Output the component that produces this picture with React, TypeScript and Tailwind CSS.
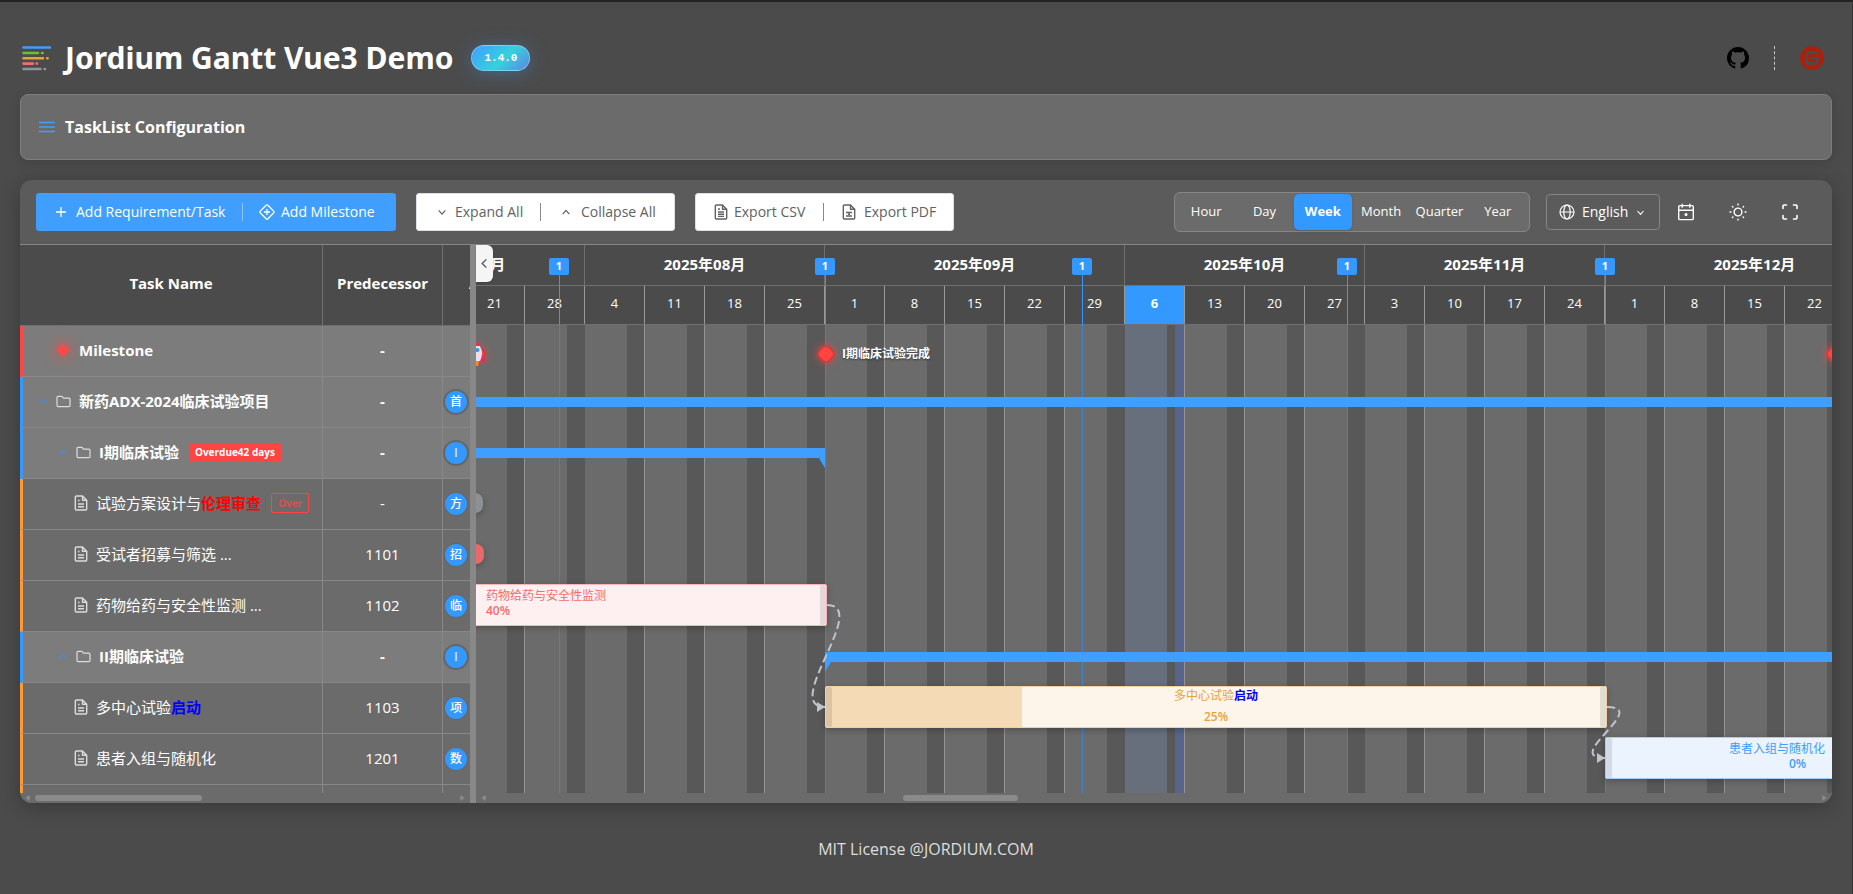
import type { ReactNode } from 'react';

const DAY = 60 / 7;
const WEEK = 60;
const SCROLL_LEFT = 131;

const months = [
  { label: '2025年07月', first: 0, weeks: [7, 14, 21, 28] },
  { label: '2025年08月', first: 4, weeks: [4, 11, 18, 25] },
  { label: '2025年09月', first: 8, weeks: [1, 8, 15, 22, 29] },
  { label: '2025年10月', first: 13, weeks: [6, 13, 20, 27] },
  { label: '2025年11月', first: 17, weeks: [3, 10, 17, 24] },
  { label: '2025年12月', first: 21, weeks: [1, 8, 15, 22, 29] },
];

const markers = [214, 480, 737, 1002, 1260];

type Row = {
  kind: 'milestone' | 'group' | 'task';
  name: ReactNode;
  predecessor: string;
  avatar?: string;
  depth: number;
};

const rows: Row[] = [
  { kind: 'milestone', name: 'Milestone', predecessor: '-', depth: 0 },
  { kind: 'group', name: '新药ADX-2024临床试验项目', predecessor: '-', avatar: '首', depth: 0 },
  {
    kind: 'group',
    name: (
      <>
        I期临床试验
        <span className="ml-2.5 rounded-xs bg-[#ff4444] px-1.5 py-0.5 text-[10px] leading-[15px]">Overdue42 days</span>
      </>
    ),
    predecessor: '-',
    avatar: 'I',
    depth: 1,
  },
  {
    kind: 'task',
    name: (
      <>
        <span>
          试验方案设计与<b className="text-[#ff0000]">伦理审查</b>
        </span>
        <span className="ml-2.5 rounded-xs border border-[#ff4444] px-1.5 text-[10px] leading-[18px] font-bold text-[#ff4444]/80">Over</span>
      </>
    ),
    predecessor: '-',
    avatar: '方',
    depth: 1,
  },
  { kind: 'task', name: '受试者招募与筛选 ...', predecessor: '1101', avatar: '招', depth: 1 },
  { kind: 'task', name: '药物给药与安全性监测 ...', predecessor: '1102', avatar: '临', depth: 1 },
  { kind: 'group', name: 'II期临床试验', predecessor: '-', avatar: 'I', depth: 1 },
  {
    kind: 'task',
    name: (
      <span>
        多中心试验<b className="text-[#0000ff]">启动</b>
      </span>
    ),
    predecessor: '1103',
    avatar: '项',
    depth: 1,
  },
  { kind: 'task', name: '患者入组与随机化', predecessor: '1201', avatar: '数', depth: 1 },
];

function Logo() {
  return (
    <svg viewBox="0 0 30 26" className="h-[26px] w-[30px]" strokeWidth="2.6" strokeLinecap="round" fill="none" aria-hidden="true">
      <path d="M2.5 2.5H29" stroke="#409eff" />
      <path d="M2.5 8H17M21 8h.6" stroke="#67c23a" />
      <path d="M2.5 13.3H22M26.2 13.3h.4" stroke="#e6a23c" />
      <path d="M2.5 18.6H12M15.6 18.6h.4" stroke="#f56c6c" />
      <path d="M2.5 24H19.5M23.6 24h.4" stroke="#909399" />
    </svg>
  );
}

function Chevron({ dir, className }: { dir: 'up' | 'down' | 'left'; className: string }) {
  const d = { up: 'M2 8.5 6 4l4 4.5', down: 'M2 4l4 4.5L10 4', left: 'M8 1.5 3.5 6 8 10.5' }[dir];
  return (
    <svg viewBox="0 0 12 12" className={className} fill="none" stroke="currentColor" strokeWidth="1.5" aria-hidden="true">
      <path d={d} />
    </svg>
  );
}

function DocIcon({ className, inner }: { className: string; inner: string }) {
  return (
    <svg viewBox="0 0 14 16" className={className} fill="none" stroke="currentColor" strokeWidth="1.4" strokeLinejoin="round" aria-hidden="true">
      <path d="M8.5 1H2.5A1.2 1.2 0 0 0 1.3 2.2v11.6A1.2 1.2 0 0 0 2.5 15h9a1.2 1.2 0 0 0 1.2-1.2V5.2zM8.5 1v4.2h4.2" />
      <path d={inner} />
    </svg>
  );
}

function FolderIcon() {
  return (
    <svg viewBox="0 0 16 14" className="h-[13px] w-[15px] shrink-0 text-[#dcdcdc]" fill="none" stroke="currentColor" strokeWidth="1.3" strokeLinejoin="round" aria-hidden="true">
      <path d="M2.2 1.5h4.2l1.6 1.8h5.8a1.2 1.2 0 0 1 1.2 1.2v6.8a1.2 1.2 0 0 1-1.2 1.2H2.2A1.2 1.2 0 0 1 1 11.3V2.7A1.2 1.2 0 0 1 2.2 1.5z" />
    </svg>
  );
}

function Header() {
  return (
    <header className="flex h-[92px] shrink-0 items-center justify-between pt-5 pr-2 pl-px">
      <div className="flex items-center">
        <Logo />
        <h1 className="ml-3.5 font-['Noto_Sans',sans-serif] text-[30px] leading-9 font-bold">Jordium Gantt Vue3 Demo</h1>
        <span className="ml-[18px] rounded-full border border-white/30 bg-[linear-gradient(135deg,#409eff_0%,#36d1dc_55%,#5b86e5_100%)] px-3 py-1 font-['Liberation_Mono',monospace] text-[11px] leading-4 font-bold shadow-[0_2px_18px_rgba(64,158,255,0.35)]">
          1.4.0
        </span>
      </div>
      <div className="flex items-center">
        <a href="#github" aria-label="GitHub">
          <svg viewBox="0 0 16 16" className="size-[22px]" fill="#000">
            <path d="M8 0C3.58 0 0 3.58 0 8c0 3.54 2.29 6.53 5.47 7.59.4.07.55-.17.55-.38 0-.19-.01-.82-.01-1.49-2.01.37-2.53-.49-2.69-.94-.09-.23-.48-.94-.82-1.13-.28-.15-.68-.52-.01-.53.63-.01 1.08.58 1.23.82.72 1.21 1.87.87 2.33.66.07-.52.28-.87.51-1.07-1.78-.2-3.64-.89-3.64-3.95 0-.87.31-1.59.82-2.15-.08-.2-.36-1.02.08-2.12 0 0 .67-.21 2.2.82.64-.18 1.32-.27 2-.27.68 0 1.36.09 2 .27 1.53-1.04 2.2-.82 2.2-.82.44 1.1.16 1.92.08 2.12.51.56.82 1.27.82 2.15 0 3.07-1.87 3.75-3.65 3.95.29.25.54.73.54 1.48 0 1.07-.01 1.93-.01 2.2 0 .21.15.46.55.38A8.013 8.013 0 0016 8c0-4.42-3.58-8-8-8z" />
          </svg>
        </a>
        <span className="mx-[25px] h-6 border-l border-dashed border-[#c8c8c8]" />
        <a href="#gitee" aria-label="Gitee">
          <svg viewBox="0 0 24 24" className="size-6" fill="#a9200f">
            <path d="M11.984 0A12 12 0 0 0 0 12a12 12 0 0 0 12 12 12 12 0 0 0 12-12A12 12 0 0 0 12 0a12 12 0 0 0-.016 0zm6.09 5.333c.328 0 .593.266.592.593v1.482a.594.594 0 0 1-.593.592H9.777c-.982 0-1.778.796-1.778 1.778v5.63c0 .327.266.592.593.592h5.63c.982 0 1.778-.796 1.778-1.778v-.296a.593.593 0 0 0-.592-.593h-4.15a.592.592 0 0 1-.592-.592v-1.482a.593.593 0 0 1 .593-.592h6.815c.327 0 .593.265.593.592v3.408a4 4 0 0 1-4 4H5.926a.593.593 0 0 1-.593-.593V9.778a4.444 4.444 0 0 1 4.445-4.444h8.296Z" />
          </svg>
        </a>
      </div>
    </header>
  );
}

function Separator({ className }: { className: string }) {
  return <span className={`h-[18px] w-px ${className}`} />;
}

function Toolbar() {
  const button = 'flex h-full items-center pl-[18px]';
  return (
    <div className="flex h-[65px] shrink-0 items-center border-b border-[#868686] bg-[#5b5b5b] pl-4">
      <div className="flex h-[38px] items-center rounded-[3px] bg-[#409eff] text-sm">
        <button type="button" className={`${button} w-[206px]`}>
          <svg viewBox="0 0 14 14" className="mr-2 size-3.5" stroke="#fff" strokeWidth="1.3" aria-hidden="true">
            <path d="M7 2v10M2 7h10" />
          </svg>
          Add Requirement/Task
        </button>
        <Separator className="bg-white/40" />
        <button type="button" className="flex h-full w-[153px] items-center pl-4">
          <svg viewBox="0 0 16 16" className="mr-1.5 size-4" fill="none" stroke="#fff" strokeWidth="1.3" aria-hidden="true">
            <path d="M7.1 1.3a1.3 1.3 0 0 1 1.8 0l5.8 5.8a1.3 1.3 0 0 1 0 1.8l-5.8 5.8a1.3 1.3 0 0 1-1.8 0L1.3 8.9a1.3 1.3 0 0 1 0-1.8zM8 5v6M5 8h6" />
          </svg>
          Add Milestone
        </button>
      </div>

      <div className="ml-5 flex h-[38px] items-center rounded-[3px] border border-[#dcdfe6] bg-white text-sm text-[#606266]">
        <button type="button" className={`${button} w-[123px]`}>
          <Chevron dir="down" className="mr-2 ml-0.5 size-2.5" />
          Expand All
        </button>
        <Separator className="bg-[#8a8a8a]" />
        <button type="button" className={`${button} w-[133px]`}>
          <Chevron dir="up" className="mr-2.5 ml-0.5 size-2.5" />
          Collapse All
        </button>
      </div>

      <div className="ml-5 flex h-[38px] items-center rounded-[3px] border border-[#dcdfe6] bg-white text-sm text-[#606266]">
        <button type="button" className={`${button} w-[127px]`}>
          <DocIcon className="mr-1.5 h-4 w-3.5" inner="M4 8h6M4 10.2h6M4 12.4h6M4 5h2" />
          Export CSV
        </button>
        <Separator className="bg-[#8a8a8a]" />
        <button type="button" className={`${button} w-[129px]`}>
          <DocIcon className="mr-2 h-4 w-3.5" inner="M4 8.5h6M4 12h6M6 10.2h2" />
          Export PDF
        </button>
      </div>

      <div className="ml-auto grid h-10 w-[356px] grid-cols-6 rounded-md border border-[#868686] bg-[#6b6b6b] px-0.5 py-px text-[13px]">
        {['Hour', 'Day', 'Week', 'Month', 'Quarter', 'Year'].map((v) => (
          <button
            key={v}
            type="button"
            aria-pressed={v === 'Week'}
            className={v === 'Week' ? 'rounded-[5px] bg-[#3399ff] font-bold shadow' : 'rounded-[5px]'}
          >
            {v}
          </button>
        ))}
      </div>

      <label className="relative ml-4 flex h-9 w-[114px] items-center rounded border border-[#868686] text-sm">
        <svg viewBox="0 0 16 16" className="pointer-events-none absolute left-3 size-4" fill="none" stroke="#fff" strokeWidth="1.2" aria-hidden="true">
          <circle cx="8" cy="8" r="7" />
          <ellipse cx="8" cy="8" rx="3.2" ry="7" />
          <path d="M1 8h14" />
        </svg>
        <select aria-label="Language" className="h-full w-full appearance-none rounded bg-transparent pl-[35px] outline-none">
          <option>English</option>
        </select>
        <Chevron dir="down" className="pointer-events-none absolute right-3.5 size-[9px]" />
      </label>

      <div className="mr-4 flex">
        <button type="button" aria-label="Today" className="flex h-9 w-[52px] items-center justify-center">
          <svg viewBox="0 0 18 18" className="size-[18px]" fill="none" stroke="#fff" strokeWidth="1.4" strokeLinejoin="round">
            <rect x="1.7" y="2.6" width="14.6" height="14" rx="1.2" />
            <path d="M1.7 7.3h14.6M5.2 .8v4M12.8 .8v4" />
            <circle cx="9" cy="11.6" r="1.5" fill="#fff" stroke="none" />
          </svg>
        </button>
        <button type="button" aria-label="Light theme" className="flex h-9 w-[52px] items-center justify-center">
          <svg viewBox="0 0 18 18" className="size-[18px]" fill="none" stroke="#fff" strokeWidth="1.4" strokeLinecap="round">
            <circle cx="9" cy="9" r="3.9" />
            <path d="M9 1v.9M9 16.1v.9M1 9h.9M16.1 9h.9M3.4 3.4l.5.5M14.1 14.1l.5.5M3.4 14.6l.5-.5M14.1 3.9l.5-.5" />
          </svg>
        </button>
        <button type="button" aria-label="Fullscreen" className="flex h-9 w-[52px] items-center justify-center">
          <svg viewBox="0 0 18 18" className="size-[18px]" fill="none" stroke="#fff" strokeWidth="1.6" strokeLinecap="round" strokeLinejoin="round">
            <path d="M2 5.5V3a1 1 0 0 1 1-1h2.5M12.5 2H15a1 1 0 0 1 1 1v2.5M16 12.5V15a1 1 0 0 1-1 1h-2.5M5.5 16H3a1 1 0 0 1-1-1v-2.5" />
          </svg>
        </button>
      </div>
    </div>
  );
}

function NameCell({ row }: { row: Row }) {
  if (row.kind === 'milestone') {
    return (
      <div className="flex items-center pl-[35px]">
        <span className="mr-[11px] size-2.5 shrink-0 rotate-45 bg-[#f44b4b] shadow-[0_0_14px_3px_rgba(255,68,68,0.45)]" />
        {row.name}
      </div>
    );
  }
  if (row.kind === 'group') {
    return (
      <div className={`flex items-center ${row.depth ? 'pl-[35px]' : 'pl-[15px]'}`}>
        <button type="button" aria-label="Toggle" className="mr-2 shrink-0 text-[#3f8fe0]">
          <Chevron dir="up" className="size-2.5" />
        </button>
        <FolderIcon />
        <span className="ml-2 flex items-center">{row.name}</span>
      </div>
    );
  }
  return (
    <div className="flex items-center pl-[51px]">
      <DocIcon className="mr-2 h-4 w-3.5 shrink-0 text-[#dcdcdc]" inner="M4 9h6M4 11.8h6M4 5.5h1.5" />
      {row.name}
    </div>
  );
}

const edge = { milestone: 'border-l-[#ff4444]', group: 'border-l-[#3399ff]', task: 'border-l-[#ff9933]' };

function TaskTable() {
  const line = 'border-r border-b border-[#888]';
  return (
    <div className="flex w-[450px] shrink-0 flex-col">
      <div className="min-h-0 flex-1 overflow-hidden">
        <table className="w-[560px] table-fixed border-separate border-spacing-0 text-[15px]">
          <colgroup>
            <col className="w-[303px]" />
            <col className="w-[120px]" />
            <col className="w-[137px]" />
          </colgroup>
          <thead>
            <tr className="h-[81px] bg-[#4b4b4b]">
              <th className="border-r border-b border-[#707070] pb-1">Task Name</th>
              <th className="border-r border-b border-[#707070] px-0 pb-1">Predecessor</th>
              <th className="border-b border-[#707070] pb-1 pl-[26px] text-left">Assignee</th>
            </tr>
          </thead>
          <tbody>
            {rows.map((row, i) => (
              <tr key={i} className={row.kind === 'task' ? 'h-[51px] bg-[#6b6b6b]' : 'h-[51px] bg-[#7c7c7c] font-bold'}>
                <td className={`${line} border-l-[3px] ${edge[row.kind]} p-0 pb-0.5 whitespace-nowrap`}>
                  <NameCell row={row} />
                </td>
                <td className={`${line} p-0 pb-0.5 text-center`}>{row.predecessor}</td>
                <td className="border-b border-[#888] p-0 pl-0.5">
                  {row.avatar && (
                    <span
                      className={`flex size-[22px] items-center justify-center rounded-full bg-[#3399ff] text-xs font-medium ${
                        row.kind === 'group' ? 'ring-2 ring-[#666]' : 'ring-1 ring-[#666]'
                      }`}
                    >
                      {row.avatar}
                    </span>
                  )}
                </td>
              </tr>
            ))}
            <tr className="h-[51px]">
              <td className={`${line} border-l-[3px] ${edge.task}`} />
              <td className={line} />
              <td />
            </tr>
          </tbody>
        </table>
      </div>
      <div className="flex h-2.5 shrink-0 items-center bg-[#6b6b6b] px-[5px]">
        <Arrow dir="left" />
        <div className="ml-[5px] h-1.5 w-[167px] rounded-full bg-[#8a8a8a]" />
        <div className="flex-1" />
        <Arrow dir="right" />
      </div>
    </div>
  );
}

function Arrow({ dir }: { dir: 'left' | 'right' }) {
  return (
    <svg viewBox="0 0 6 8" className="h-1.5 w-[5px] shrink-0" fill="#8a8a8a" aria-hidden="true">
      <path d={dir === 'left' ? 'M6 0v8L0 4z' : 'M0 0v8l6-4z'} />
    </svg>
  );
}

function MilestoneDot({ left }: { left: number }) {
  return (
    <span
      className="absolute top-[21px] size-4 rotate-45 rounded-md border-2 border-[#d83a3a] bg-[#ff4444] shadow-[0_0_10px_rgba(255,68,68,0.7)]"
      style={{ left: left - 8 }}
    />
  );
}

type BarProps = {
  left: number;
  right: number;
  top: number;
  tone: string;
  startGrip?: boolean;
  endGrip?: boolean;
  progress?: number;
  children: ReactNode;
};

function Bar({ left, right, top, tone, startGrip, endGrip, progress, children }: BarProps) {
  return (
    <div
      className={`absolute h-[42px] rounded-xs border text-xs shadow-[0_2px_6px_rgba(0,0,0,0.25)] ${tone}`}
      style={{ left, top, width: right - left }}
    >
      {progress && <div className="absolute inset-y-0 left-0 bg-[#f5dab6]" style={{ width: progress }} />}
      {startGrip && <div className="absolute inset-y-0 left-0 w-1.5 rounded-xs bg-black/10" />}
      {endGrip && <div className="absolute inset-y-0 right-0 w-1.5 rounded-xs bg-black/10" />}
      {children}
    </div>
  );
}

function Timeline() {
  return (
    <div className="relative flex min-w-0 flex-1 flex-col">
      <div className="min-h-0 flex-1 overflow-hidden">
        <div className="relative -ml-[131px] flex h-full w-[1560px] flex-col">
          <div className="flex h-10 shrink-0 bg-[#4b4b4b] text-[15px] font-bold">
            {months.map((m) => (
              <div
                key={m.label}
                className="flex shrink-0 items-center justify-center border-r border-[#707070] pb-0.5"
                style={{ width: m.weeks.length * WEEK }}
              >
                {m.label}
              </div>
            ))}
          </div>
          <div className="flex h-10 shrink-0 border-y border-[#707070] bg-[#4b4b4b] text-[13px]">
            {months.map((m) =>
              m.weeks.map((w, i) => {
                const today = m.label === '2025年10月' && w === 6;
                const onScreen = (m.first + i + 1) * WEEK > SCROLL_LEFT;
                return (
                  <div
                    key={`${m.label}-${w}`}
                    className={`flex w-[60px] shrink-0 items-center justify-center border-r border-[#999] pb-0.5 ${today ? 'bg-[#3399ff] font-bold' : ''}`}
                  >
                    {onScreen && w}
                  </div>
                );
              }),
            )}
          </div>

          <div className="relative flex min-h-0 flex-1 overflow-hidden bg-[#6b6b6b]">
            {months.map((m) =>
              m.weeks.map((w, i) => {
                const today = m.label === '2025年10月' && w === 6;
                const last = i === m.weeks.length - 1;
                return (
                  <div
                    key={`${m.label}-${w}`}
                    className={`flex w-[60px] shrink-0 justify-end border-r ${last ? 'border-[#585858]' : 'border-[#959595]'} ${today ? 'bg-[#666f7b]' : ''}`}
                  >
                    <div className="bg-[#585858]" style={{ width: today ? DAY : DAY * 2 }} />
                    {today && <div className="bg-[#566589]" style={{ width: DAY }} />}
                  </div>
                );
              }),
            )}

            {markers.map((x) => (
              <div key={x} className="absolute inset-y-0 w-px bg-[#3f83c8]" style={{ left: x }} />
            ))}

            {/* milestones */}
            <MilestoneDot left={132} />
            <svg viewBox="0 0 20 24" className="absolute top-[17px] left-[122px] h-6 w-5" aria-hidden="true">
              <path d="M8 19h4l-1 5H9z" fill="#f5882a" />
              <path d="M5 12 2 17v3l4-1h8l4 1v-3l-3-5z" fill="#f0285f" />
              <path d="M10 1c3 2.500 5 6 5 10 0 3-1 6-2 8H7c-1-2-2-5-2-8 0-4 2-7.500 5-10z" fill="#e6e0ef" />
              <path d="M10 0c1.500 1.200 2.600 2.500 3.400 4H6.600C7.400 2.500 8.500 1.200 10 0z" fill="#ee2b55" />
              <circle cx="10.500" cy="8" r="2" fill="#3f93e0" />
            </svg>
            <MilestoneDot left={481} />
            <span className="absolute top-5 left-[497px] text-xs leading-[18px] font-bold whitespace-nowrap [text-shadow:0_1px_2px_rgba(0,0,0,0.5)]">
              I期临床试验完成
            </span>
            <MilestoneDot left={1490} />

            {/* summary bars */}
            <div className="absolute top-[72px] left-0 h-2.5 w-full bg-[#409eff]" />
            <div className="absolute top-[123px] left-0 h-2.5 w-[480px] bg-[#409eff]" />
            <div className="absolute top-[327px] right-0 left-[480px] h-2.5 bg-[#409eff]" />
            <svg className="absolute top-[133px] left-[474px] h-2.5 w-1.5" viewBox="0 0 6 10" aria-hidden="true">
              <path d="M0 0h6v10z" fill="#409eff" />
            </svg>
            <svg className="absolute top-[337px] left-[480px] h-2.5 w-1.5" viewBox="0 0 6 10" aria-hidden="true">
              <path d="M0 0h6L0 10z" fill="#409eff" />
            </svg>

            {/* task bars */}
            <div className="absolute top-[168px] left-0 h-5 w-[138px] rounded-lg bg-[#8d9095] shadow-[0_2px_6px_rgba(0,0,0,0.25)]" />
            <div className="absolute top-[219px] left-0 h-5 w-[139px] rounded-lg bg-[#e66a6a] shadow-[0_2px_6px_rgba(0,0,0,0.25)]" />
            <Bar left={60} right={482} top={259} tone="border-[#fab6b6] bg-[#fef0f0] text-[#f56c6c]" endGrip>
              <div className="absolute top-[3px] left-20 leading-[15px]">
                药物给药与安全性监测
                <div className="font-semibold">40%</div>
              </div>
            </Bar>
            <Bar left={480} right={1262} top={361} tone="border-[#f3d19e] bg-[#fdf5ea] text-[#e6a23c]" progress={196} startGrip endGrip>
              <div className="relative flex h-full flex-col items-center justify-between pb-px leading-[18px]">
                <span>
                  多中心试验<b className="text-[#0000ff]">启动</b>
                </span>
                <span className="font-semibold">25%</span>
              </div>
            </Bar>
            <Bar left={1260} right={1645} top={412} tone="border-[#a0cfff] bg-[#ebf3ff] text-[#409eff]" startGrip>
              <div className="absolute top-[3px] left-[123px] leading-[15px]">
                患者入组与随机化
                <div className="pl-[60px] font-semibold">0%</div>
              </div>
            </Bar>

            {/* dependency links */}
            <svg className="absolute inset-0 h-full w-full" fill="none" aria-hidden="true">
              <g stroke="#c0c4cc" strokeWidth="2" strokeDasharray="8 4">
                <path d="M482 280C526 280 436 382 480 382" />
                <path d="M1262 382C1306 382 1216 433 1260 433" />
              </g>
              <path d="M472 377l8 5-8 5zM1252 428l8 5-8 5z" fill="#c0c4cc" />
            </svg>
          </div>

          {markers.map((x) => (
            <div key={x} className="absolute top-[13px] flex w-5 flex-col items-center" style={{ left: x - 10 }}>
              <span className="flex h-[17px] w-5 items-center justify-center rounded-xs bg-[#3399ff] text-[11px] font-bold">1</span>
              <span className="h-[50px] w-px bg-[#3399ff]" />
            </div>
          ))}
        </div>
      </div>
      <div className="flex h-2.5 shrink-0 items-center bg-[#6b6b6b] px-[5px]">
        <Arrow dir="left" />
        <div className="flex flex-1">
          <div className="ml-[31.2%] h-1.5 w-[115px] rounded-full bg-[#8a8a8a]" />
        </div>
        <Arrow dir="right" />
      </div>
      <button
        type="button"
        aria-label="Collapse task list"
        className="absolute top-0 left-0 flex h-[37px] w-[17px] items-center justify-center rounded-r-md bg-[#f5f5f5] text-[#555] shadow"
      >
        <Chevron dir="left" className="size-[11px]" />
      </button>
    </div>
  );
}

export default function App() {
  return (
    <div className="flex h-screen min-h-[600px] flex-col border-t-2 border-r border-t-[#222] border-r-[#333] bg-[#4b4b4b] px-5 font-['Open_Sans','Noto_Sans_CJK_SC',sans-serif] text-white">
      <Header />
      <section className="mb-5 flex h-[66px] shrink-0 items-center rounded-lg border border-[#7d7d7d] bg-[#6b6b6b] pl-[18px] shadow-[0_2px_10px_rgba(0,0,0,0.15)]">
        <svg viewBox="0 0 16 12" className="mr-2.5 h-3 w-4" stroke="#409eff" strokeWidth="1.5" aria-hidden="true">
          <path d="M0 1.500h16M0 6h16M0 10.500h16" />
        </svg>
        <h2 className="text-base font-bold">TaskList Configuration</h2>
      </section>
      <main className="flex min-h-0 flex-1 flex-col overflow-hidden rounded-xl shadow-[0_4px_20px_rgba(0,0,0,0.25)]">
        <Toolbar />
        <div className="flex min-h-0 flex-1 bg-[#6b6b6b]">
          <TaskTable />
          <div className="w-1.5 shrink-0 cursor-col-resize bg-[#888]" />
          <Timeline />
        </div>
      </main>
      <footer className="flex h-[91px] shrink-0 items-center justify-center text-base text-[#dedede]">MIT License @JORDIUM.COM</footer>
    </div>
  );
}
